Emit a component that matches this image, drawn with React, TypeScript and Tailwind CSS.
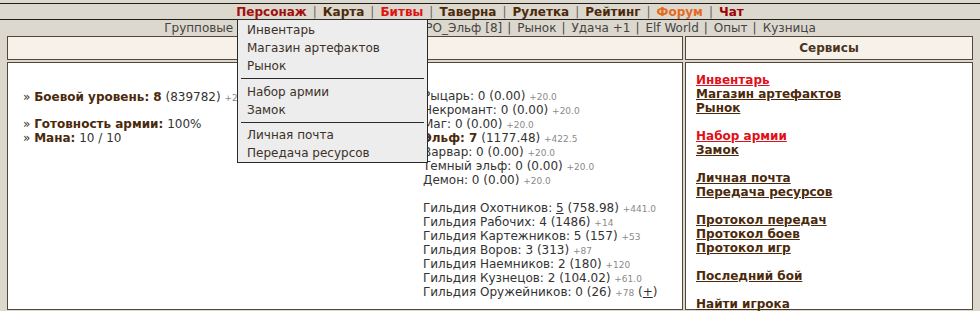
import React from 'react';

const topMenu = [
  { label: 'Персонаж', color: 'text-[#a00f0f]' },
  { label: 'Карта', color: 'text-[#4b2a0c]' },
  { label: 'Битвы', color: 'text-[#dd1414]' },
  { label: 'Таверна', color: 'text-[#4b2a0c]' },
  { label: 'Рулетка', color: 'text-[#4b2a0c]' },
  { label: 'Рейтинг', color: 'text-[#4b2a0c]' },
  { label: 'Форум', color: 'text-[#e46a1c]' },
  { label: 'Чат', color: 'text-[#9b0000]' },
];

const subMenu = ['Групповые бои', 'Тренировки', 'Охота', 'ГРО_Эльф [8]', 'Рынок', 'Удача +1', 'Elf World', 'Опыт', 'Кузница'];

const factions = [
  { name: 'Рыцарь', lvl: '0', pts: '0.00', inc: '+20.0' },
  { name: 'Некромант', lvl: '0', pts: '0.00', inc: '+20.0' },
  { name: 'Маг', lvl: '0', pts: '0.00', inc: '+20.0' },
  { name: 'Эльф', lvl: '7', pts: '1177.48', inc: '+422.5', bold: true },
  { name: 'Варвар', lvl: '0', pts: '0.00', inc: '+20.0' },
  { name: 'Темный эльф', lvl: '0', pts: '0.00', inc: '+20.0' },
  { name: 'Демон', lvl: '0', pts: '0.00', inc: '+20.0' },
];

const guilds = [
  { name: 'Гильдия Охотников', lvl: '5', pts: '758.98', inc: '+441.0', link: true },
  { name: 'Гильдия Рабочих', lvl: '4', pts: '1486', inc: '+14' },
  { name: 'Гильдия Картежников', lvl: '5', pts: '157', inc: '+53' },
  { name: 'Гильдия Воров', lvl: '3', pts: '313', inc: '+87' },
  { name: 'Гильдия Наемников', lvl: '2', pts: '180', inc: '+120' },
  { name: 'Гильдия Кузнецов', lvl: '2', pts: '104.02', inc: '+61.0' },
  { name: 'Гильдия Оружейников', lvl: '0', pts: '26', inc: '+78', plus: true },
];

// null = empty line
const services: ({ label: string; red?: boolean } | null)[] = [
  { label: 'Инвентарь', red: true },
  { label: 'Магазин артефактов' },
  { label: 'Рынок' },
  null,
  { label: 'Набор армии', red: true },
  { label: 'Замок' },
  null,
  { label: 'Личная почта' },
  { label: 'Передача ресурсов' },
  null,
  { label: 'Протокол передач' },
  { label: 'Протокол боев' },
  { label: 'Протокол игр' },
  null,
  { label: 'Последний бой' },
  null,
  { label: 'Найти игрока' },
];

// strings are items, others are separator lines
const dropdown: (string | { sep: string })[] = [
  'Инвентарь',
  'Магазин артефактов',
  'Рынок',
  { sep: 'mb-[4px]' },
  'Набор армии',
  'Замок',
  { sep: 'mb-[3px]' },
  'Личная почта',
  'Передача ресурсов',
];

const Small = ({ children }: { children: React.ReactNode }) => (
  <span className="text-[9px] leading-none text-[#8a8a8a]">{children}</span>
);

export default function App() {
  return (
    <div className="relative min-h-screen bg-[#dcd8cd] font-['DejaVu_Sans',Verdana,sans-serif] text-[12px] text-[#333]">
      {/* top menu */}
      <div className="pt-[3px]">
        <div className="flex h-[17px] items-center justify-center border-y border-[#1e1e1e] font-bold">
          {topMenu.map((m, i) => (
            <React.Fragment key={m.label}>
              {i > 0 && <span className="px-[6px] font-normal text-[#666]">|</span>}
              <span className={m.color}>{m.label}</span>
            </React.Fragment>
          ))}
        </div>
      </div>

      <div className="flex h-[16px] items-center justify-center text-[#444]">
        {subMenu.map((m, i) => (
          <React.Fragment key={m}>
            {i > 0 && <span className="pl-[5px] pr-[6px]">|</span>}
            <span>{m}</span>
          </React.Fragment>
        ))}
      </div>

      {/* main table */}
      <div className="grid grid-cols-[676px_288px] gap-[2px] px-[7px]">
        <div className="h-[24px] border border-[#54463b] bg-[#f6f2ea]" />
        <div className="flex h-[24px] items-center justify-center border border-[#54463b] bg-[#f6f2ea] font-bold text-[#4a3522]">
          Сервисы
        </div>

        <div className="grid h-[248px] grid-cols-[400px_1fr] border border-[#54463b] bg-white pl-[15px] leading-[14px]">
          <div className="pt-[27px]">
            <div>
              » <b className="text-[#4b2a0c]">Боевой уровень: 8</b> (839782) <Small>+2045.7</Small>
            </div>
            <div className="h-[13px]" />
            <div>
              » <b className="text-[#4b2a0c]">Готовность армии:</b> 100%
            </div>
            <div>
              » <b className="text-[#4b2a0c]">Мана:</b> 10 / 10
            </div>
          </div>
          <div className="pt-[26px]">
            {factions.map((f) => (
              <div key={f.name} className="h-[14px]">
                {f.bold ? (
                  <b className="text-[#4b2a0c]">
                    {f.name}: {f.lvl}
                  </b>
                ) : (
                  <>
                    {f.name}: {f.lvl}
                  </>
                )}{' '}
                ({f.pts}) <Small>{f.inc}</Small>
              </div>
            ))}
            <div className="h-[14px]" />
            {guilds.map((g) => (
              <div key={g.name} className="h-[14px]">
                {g.name}: {g.link ? <span className="underline">{g.lvl}</span> : g.lvl} ({g.pts}) <Small>{g.inc}</Small>
                {g.plus && (
                  <>
                    {' '}
                    (<span className="underline">+</span>)
                  </>
                )}
              </div>
            ))}
          </div>
        </div>

        <div className="h-[248px] border border-[#54463b] bg-white px-[10px] pt-[10px] font-bold leading-[14px]">
          {services.map((s, i) =>
            s ? (
              <div key={i}>
                <span className={`underline ${s.red ? 'text-[#e0101a]' : 'text-[#4b2a0c]'}`}>{s.label}</span>
              </div>
            ) : (
              <div key={i} className="h-[14px]" />
            ),
          )}
        </div>
      </div>

      {/* open "Персонаж" menu */}
      <div className="absolute left-[237px] top-[19px] w-[191px] border border-[#2a2a2a] bg-[#ededed] pt-[1px] text-[#3b3128]">
        {dropdown.map((d, i) =>
          typeof d === 'string' ? (
            <div key={i} className="flex h-[18px] items-center pl-[9px]">
              {d}
            </div>
          ) : (
            <div key={i} className={`mx-[3px] mt-[3px] border-t border-[#2a2a2a] ${d.sep}`} />
          ),
        )}
      </div>
    </div>
  );
}
